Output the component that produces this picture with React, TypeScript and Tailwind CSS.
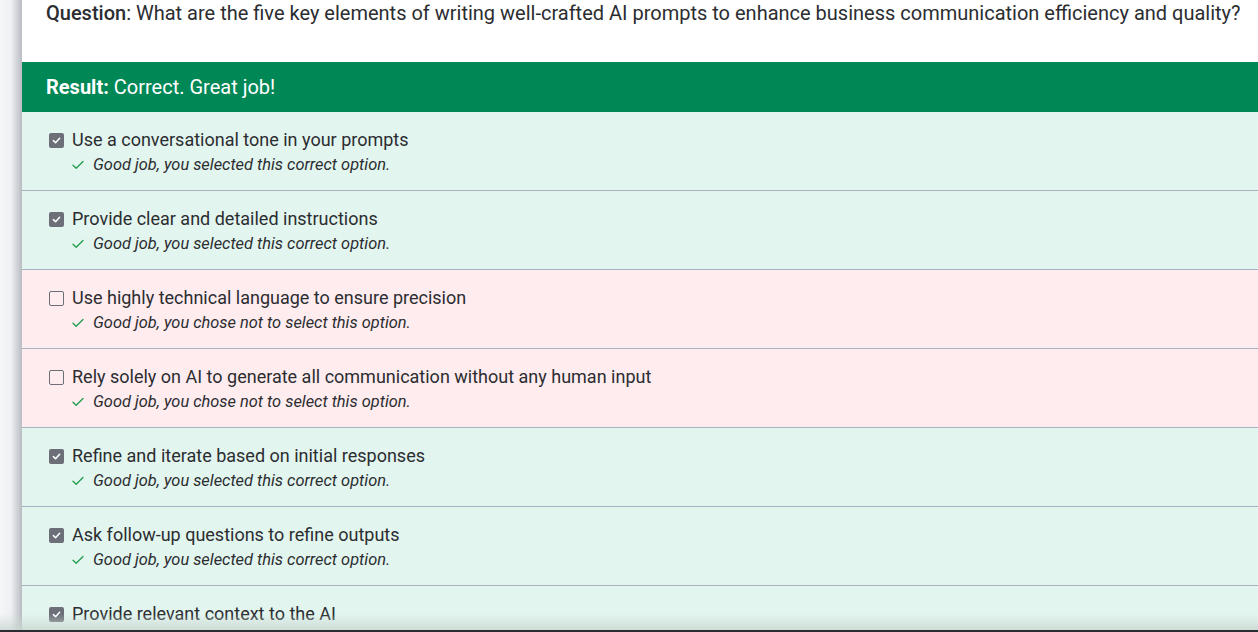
import React from "react";

type Opt = { label: string; checked: boolean; correct: boolean };

const options: Opt[] = [
  { label: "Use a conversational tone in your prompts", checked: true, correct: true },
  { label: "Provide clear and detailed instructions", checked: true, correct: true },
  { label: "Use highly technical language to ensure precision", checked: false, correct: false },
  { label: "Rely solely on AI to generate all communication without any human input", checked: false, correct: false },
  { label: "Refine and iterate based on initial responses", checked: true, correct: true },
  { label: "Ask follow-up questions to refine outputs", checked: true, correct: true },
  { label: "Provide relevant context to the AI", checked: true, correct: true },
];

function Box({ checked }: { checked: boolean }) {
  if (checked) {
    return (
      <span className="flex h-[15px] w-[15px] shrink-0 items-center justify-center rounded-[2px] bg-[#6d6f78]">
        <svg width="11" height="11" viewBox="0 0 12 12" fill="none">
          <path d="M2.6 6.2 L5 8.4 L9.4 3.6" stroke="white" strokeWidth="1.7" strokeLinecap="round" strokeLinejoin="round" />
        </svg>
      </span>
    );
  }
  return <span className="h-[15px] w-[15px] shrink-0 rounded-[2px] border-[1.5px] border-[#6d6f78] bg-transparent" />;
}

function Tick() {
  return (
    <svg width="12" height="10" viewBox="0 0 12 10" fill="none" className="shrink-0">
      <path d="M1 5.2 L4.2 8.3 L11 1.5" stroke="#1f9d4c" strokeWidth="1.3" strokeLinecap="round" strokeLinejoin="round" />
    </svg>
  );
}

export default function App() {
  return (
    <div
      className="relative flex h-[632px] w-[1258px] overflow-hidden bg-white text-[#2b2d31]"
      style={{ fontFamily: "Roboto, 'Noto Sans', 'Liberation Sans', sans-serif" }}
    >
      <div className="w-[22px] shrink-0 bg-gradient-to-r from-[#f5f6f8] via-[#eef0f3] to-[#b9bcc2]" />
      <div className="flex min-w-0 flex-1 flex-col">
        <div className="h-[62px] shrink-0 whitespace-nowrap bg-white pl-[24px] pt-0 text-[20px] leading-[26px]">
          <span className="font-medium">Question</span>: What are the five key elements of writing well-crafted AI prompts to enhance business communication efficiency and quality?
        </div>
        <div className="flex h-[50px] shrink-0 items-center bg-[#008756] pl-[24px] text-[20px] text-white">
          <span className="font-bold">Result:</span>
          <span className="ml-[5px]">Correct. Great job!</span>
        </div>
        {options.map((o, i) => (
          <div
            key={i}
            className={`h-[79px] shrink-0 border-b border-[#a9b0c2] pl-[27px] pt-[16px] ${
              o.correct ? "bg-[#e3f5ef]" : "bg-[#ffecef]"
            }`}
          >
            <div className="flex h-[24px] items-center gap-[8px]">
              <Box checked={o.checked} />
              <span className="text-[18px] leading-[24px]">{o.label}</span>
            </div>
            <div className="mt-[3px] flex h-[20px] items-center gap-[9px] pl-[23px]">
              <Tick />
              <span className="text-[16.4px] italic leading-[20px] text-[#2b2d31]">
                {o.checked
                  ? "Good job, you selected this correct option."
                  : "Good job, you chose not to select this option."}
              </span>
            </div>
          </div>
        ))}
      </div>
      <div className="pointer-events-none absolute bottom-[2px] left-0 right-0 h-[16px] bg-gradient-to-b from-transparent to-[#c9d6d0]/80" />
      <div className="pointer-events-none absolute bottom-0 left-0 right-0 h-[2px] bg-[#2a2b30]" />
    </div>
  );
}
